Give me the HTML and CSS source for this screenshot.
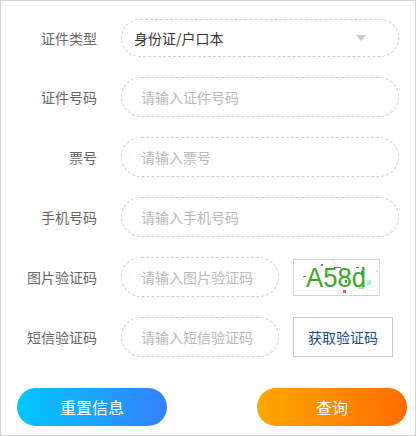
FILE: index.html
```html
<!DOCTYPE html>
<html lang="zh">
<head>
<meta charset="utf-8">
<title>查询</title>
<link rel="stylesheet" href="styles.css">
</head>
<body>
<form class="panel">
  <div class="row row-select">
    <span class="label">证件类型</span>
    <div class="field field-select"><span>身份证/户口本</span><i class="caret"></i></div>
  </div>
  <div class="row">
    <span class="label">证件号码</span>
    <div class="field field-wide">请输入证件号码</div>
  </div>
  <div class="row">
    <span class="label">票号</span>
    <div class="field field-wide">请输入票号</div>
  </div>
  <div class="row">
    <span class="label">手机号码</span>
    <div class="field field-wide">请输入手机号码</div>
  </div>
  <div class="row">
    <span class="label">图片验证码</span>
    <div class="field field-short">请输入图片验证码</div>
    <svg class="captcha" width="87" height="37" viewBox="0 0 87 37">
      <rect x="0.5" y="0.5" width="86" height="36" fill="#fff" stroke="#d4d4d4"/>
      <path d="M39 1l7 8" stroke="#e6dfc0" fill="none"/>
      <path d="M41 8.5h7" stroke="#7a5be0" fill="none"/>
      <rect x="28" y="5" width="2" height="2" fill="#2aa8a8"/>
      <rect x="63" y="8" width="3" height="1" fill="#c030c0"/>
      <rect x="83" y="11" width="2" height="2" fill="#dfe89a"/>
      <rect x="10" y="17" width="3" height="1" fill="#40b040"/>
      <rect x="74" y="21" width="4" height="5" fill="#9ff5f5"/>
      <rect x="66" y="27" width="5" height="3" fill="#9cf08c"/>
      <rect x="50" y="31" width="3" height="3" fill="#f0602a"/>
      <text class="captcha-text" x="13" y="28" textLength="60" lengthAdjust="spacingAndGlyphs">A58d</text>
      <rect x="68" y="12" width="2" height="3" fill="#1f9f7a"/>
      <rect x="52" y="21" width="2" height="3" fill="#1f9f7a"/>
    </svg>
  </div>
  <div class="row">
    <span class="label">短信验证码</span>
    <div class="field field-short">请输入短信验证码</div>
    <button type="button" class="sms">获取验证码</button>
  </div>
  <div class="actions">
    <button type="button" class="btn btn-blue">重置信息</button>
    <button type="button" class="btn btn-orange">查询</button>
  </div>
</form>
</body>
</html>
```
FILE: styles.css
```css
* { box-sizing: border-box; }
html, body { margin: 0; padding: 0; }
body {
  width: 416px;
  height: 436px;
  overflow: hidden;
  background: #fff;
  font-family: "Noto Sans CJK SC", "Liberation Sans", sans-serif;
}
.panel {
  width: 416px;
  height: 436px;
  border: 1px solid #d4d4d4;
  padding: 18px 0 0 0;
  display: flex;
  flex-direction: column;
  gap: 20px;
}
.row {
  display: flex;
  align-items: center;
  height: 40px;
}
.row-select { height: 38px; }
.label {
  width: 96px;
  text-align: right;
  font-size: 14px;
  line-height: 20px;
  color: #666;
  flex: none;
}
.field {
  margin-left: 24px;
  height: 100%;
  border: 1px dashed #cdcdcd;
  border-radius: 20px;
  font-size: 14px;
  line-height: 20px;
  color: #b8b8b8;
  padding-left: 19px;
  display: flex;
  align-items: center;
  flex: none;
}
.field-wide { width: 278px; }
.field-short { width: 158px; }
.field-select {
  width: 278px;
  color: #333;
  padding: 0 32px 0 12px;
  justify-content: space-between;
}
.caret {
  width: 0;
  height: 0;
  border-left: 5px solid transparent;
  border-right: 5px solid transparent;
  border-top: 6px solid #ccc;
}
.captcha {
  margin-left: 14px;
  flex: none;
  display: block;
}
.captcha-text {
  font-family: "Liberation Sans", sans-serif;
  font-size: 28px;
  fill: #3aa81e;
}
.sms {
  margin-left: 14px;
  width: 100px;
  height: 40px;
  padding: 0;
  background: #fff;
  border: 1px solid #c8c8c8;
  font-family: inherit;
  font-size: 14px;
  color: #1a4a8c;
  flex: none;
}
.actions {
  display: flex;
  justify-content: space-between;
  padding: 0 8px 0 16px;
  margin-top: 11px;
}
.btn {
  width: 150px;
  height: 38px;
  border: 0;
  padding: 0;
  border-radius: 19px;
  font-family: inherit;
  font-size: 16px;
  color: #fff;
}
.btn-blue { background: linear-gradient(90deg, #00c8ff, #3580ff); }
.btn-orange { background: linear-gradient(90deg, #ffa800, #ff6c00); }
```
